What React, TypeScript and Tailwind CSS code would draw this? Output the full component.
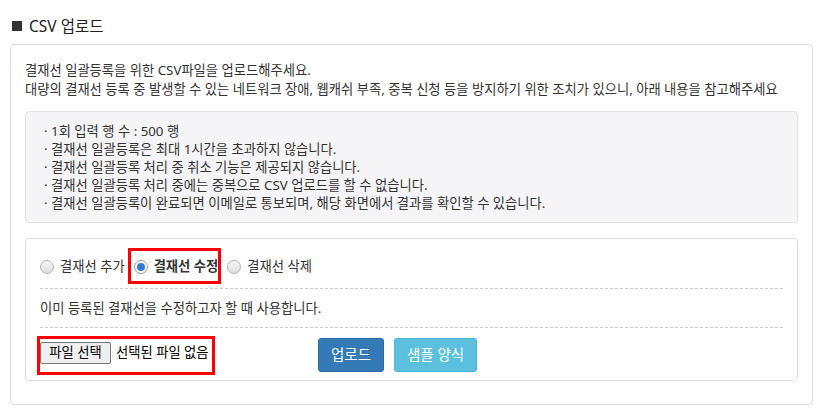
import { useState } from "react";

const notices = [
  "1회 입력 행 수 : 500 행",
  "결재선 일괄등록은 최대 1시간을 초과하지 않습니다.",
  "결재선 일괄등록 처리 중 취소 기능은 제공되지 않습니다.",
  "결재선 일괄등록 처리 중에는 중복으로 CSV 업로드를 할 수 없습니다.",
  "결재선 일괄등록이 완료되면 이메일로 통보되며, 해당 화면에서 결과를 확인할 수 있습니다.",
];

const modes = [
  { id: "add", label: "결재선 추가" },
  { id: "edit", label: "결재선 수정" },
  { id: "delete", label: "결재선 삭제" },
];

function Radio({ checked }: { checked: boolean }) {
  return (
    <span
      className={`flex h-[14px] w-[14px] shrink-0 items-center justify-center rounded-full border ${
        checked
          ? "border-[#9a9a9a] bg-white"
          : "border-[#b4b4b4] bg-gradient-to-b from-[#f7f7f7] to-[#dedede]"
      }`}
    >
      {checked ? <span className="h-[8px] w-[8px] rounded-full bg-[#2f7bd2]" /> : null}
    </span>
  );
}

export default function App() {
  const [mode, setMode] = useState("edit");

  return (
    <div className="h-[415px] w-[820px] bg-white pl-[10px] pr-[7px] font-['Noto_Sans','Noto_Sans_CJK_KR',sans-serif] text-[13.3px] text-[#333]">
      <h2 className="mt-[16px] mb-[8px] flex h-[20px] items-center gap-[7px] pl-[2px] text-[15.5px] leading-[20px] text-[#222]">
        <span className="h-[10px] w-[10px] bg-[#333]" />
        CSV 업로드
      </h2>

      <div className="rounded-[4px] border border-[#dddddd] px-[14px] pt-[16px] pb-[23px]">
        <p className="leading-[19px]">결재선 일괄등록을 위한 CSV파일을 업로드해주세요.</p>
        <p className="leading-[19px]">
          대량의 결재선 등록 중 발생할 수 있는 네트워크 장애, 웹캐쉬 부족, 중복 신청 등을 방지하기 위한 조치가 있으니, 아래 내용을 참고해주세요
        </p>

        <ul className="mt-[12px] rounded-[4px] border border-[#e3e3e3] bg-[#f5f5f8] py-[10px] pl-[18px] leading-[18px]">
          {notices.map((n) => (
            <li key={n}>· {n}</li>
          ))}
        </ul>

        <div className="mt-[15px] rounded-[4px] border border-[#e0e0e0] px-[14px] pt-[11px] pb-[8px]">
          <div className="flex h-[34px] items-center">
            {modes.map((m, i) => (
              <label
                key={m.id}
                onClick={() => setMode(m.id)}
                className={`relative flex cursor-pointer items-center gap-[6px] ${i > 0 ? "ml-[9px]" : ""} ${
                  mode === m.id ? "font-bold" : ""
                }`}
              >
                <Radio checked={mode === m.id} />
                <span>{m.label}</span>
                {m.id === "edit" ? (
                  <span className="pointer-events-none absolute -left-[6px] -right-[3px] -top-[9px] -bottom-[7px] border-[3px] border-[#ff0000]" />
                ) : null}
              </label>
            ))}
          </div>

          <div className="mt-[4px] border-t border-dashed border-[#cccccc] py-[9px] leading-[20px]">
            이미 등록된 결재선을 수정하고자 할 때 사용합니다.
          </div>

          <div className="flex border-t border-dashed border-[#cccccc] pt-[10px]">
            <div className="flex h-[34px] w-[278px] items-start pt-[4px]">
              <span className="relative flex items-center gap-[5px]">
                <span className="flex h-[22px] w-[71px] items-center justify-center rounded-[2px] border border-[#767676] bg-[#efefef] text-[13.3px] text-black">
                  파일 선택
                </span>
                <span className="text-[13.3px] text-black">선택된 파일 없음</span>
                <span className="pointer-events-none absolute -left-[3px] -right-[6px] -top-[6px] -bottom-[11px] border-[3px] border-[#ff0000]" />
              </span>
            </div>
            <div className="flex gap-[10px]">
              <button className="h-[34px] rounded-[3px] border border-[#2e6da4] bg-[#337ab7] px-[12px] text-[14.5px] text-white">
                업로드
              </button>
              <button className="h-[34px] rounded-[3px] border border-[#46b8da] bg-[#5bc0de] px-[12px] text-[14.5px] text-white">
                샘플 양식
              </button>
            </div>
          </div>
        </div>
      </div>
    </div>
  );
}
